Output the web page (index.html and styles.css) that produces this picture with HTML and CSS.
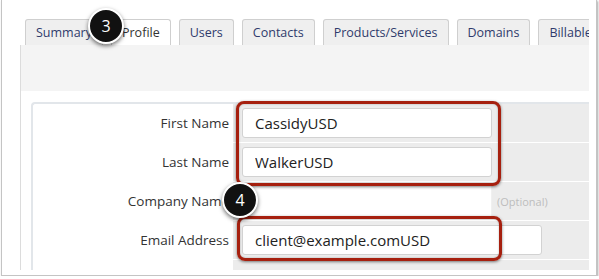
FILE: index.html
```html
<!DOCTYPE html>
<html lang="en">
<head>
    <meta charset="UTF-8">
    <meta name="viewport" content="width=device-width, initial-scale=1.0">
    <title>Client Profile</title>
    <link rel="stylesheet" href="styles.css">
</head>
<body>
    <div class="frame">
        <div class="tabs">
            <a href="#" class="tab">Summary</a>
            <a href="#" class="tab active">Profile</a>
            <a href="#" class="tab">Users</a>
            <a href="#" class="tab">Contacts</a>
            <a href="#" class="tab">Products/Services</a>
            <a href="#" class="tab">Domains</a>
            <a href="#" class="tab">Billable Items</a>
        </div>

        <div class="tab-panel">
            <div class="panel-head"></div>
            <div class="panel-body">
                <div class="form-box">
                    <div class="form-row">
                        <label class="field-label">First Name</label>
                        <div class="field">
                            <input type="text" class="text-input" value="CassidyUSD">
                        </div>
                    </div>
                    <div class="form-row">
                        <label class="field-label">Last Name</label>
                        <div class="field">
                            <input type="text" class="text-input" value="WalkerUSD">
                        </div>
                    </div>
                    <div class="form-row">
                        <label class="field-label">Company Name</label>
                        <div class="field">
                            <input type="text" class="text-input company-input" value="">
                            <span class="optional">(Optional)</span>
                        </div>
                    </div>
                    <div class="form-row">
                        <label class="field-label">Email Address</label>
                        <div class="field">
                            <input type="text" class="text-input wide" value="client@example.comUSD">
                        </div>
                    </div>
                    <div class="form-row">
                        <label class="field-label"></label>
                        <div class="field"></div>
                    </div>
                </div>
            </div>
        </div>

        <!-- annotations -->
        <div class="callout callout-names"></div>
        <div class="callout callout-email"></div>
        <div class="badge badge-3">3</div>
        <div class="badge badge-4">4</div>
    </div>
</body>
</html>
```

FILE: styles.css
```css
* {
    box-sizing: border-box;
}
body {
    margin: 0;
    font-family: "Open Sans", Arial, sans-serif;
    background-color: white;
}
.frame {
    position: relative;
    margin-left: 1px;
    width: 596px;
    height: 276px;
    padding-top: 19px;
    background: white;
    border: 1px solid #c4c4c4;
    border-top: none;
    box-shadow: 1px 1px 2px rgba(0,0,0,0.35);
    overflow: hidden;
}
.tabs {
    display: flex;
    gap: 8px;
    margin-left: 23px;
    width: 564px;
    height: 26px;
    white-space: nowrap;
    overflow: hidden;
}
.tab {
    display: block;
    height: 26px;
    line-height: 26px;
    padding: 0 10px;
    font-size: 12.5px;
    color: #2f3b6c;
    text-decoration: none;
    background: #efefef;
    border: 1px solid #cfcfcf;
    border-bottom: none;
    border-radius: 3px 3px 0 0;
    flex-shrink: 0;
}
.tab.active {
    background: white;
    color: #333;
}
.tab-panel {
    margin-left: 18px;
    width: 569px;
    height: 225px;
    border-left: 1px solid #dcdcdc;
    overflow: hidden;
}
.panel-head {
    height: 46px;
    background: #f4f4f4;
}
.panel-body {
    padding: 11px 0 0 10px;
}
.form-box {
    width: 600px;
    border: 2px solid #e2e6ea;
    border-right: none;
    border-radius: 4px 0 0 0;
}
.form-row {
    display: grid;
    grid-template-columns: 200px 1fr;
    height: 38px;
    margin-bottom: 1px;
}
.field-label {
    display: flex;
    align-items: center;
    justify-content: flex-end;
    padding-right: 4px;
    font-size: 13.5px;
    color: #333;
}
.field {
    display: flex;
    align-items: center;
    gap: 5px;
    padding-left: 9px;
    background: #ececec;
}
.text-input {
    width: 250px;
    height: 30px;
    padding: 0 12px;
    font-family: "Open Sans", Arial, sans-serif;
    font-size: 15px;
    color: #222;
    background: white;
    border: 1px solid #d2d2d2;
    border-radius: 3px;
}
.text-input.wide {
    width: 300px;
}
.company-input {
    height: 36px;
    border-color: #f0f0f0;
}
.optional {
    font-size: 11px;
    color: #bdbdbd;
}
.callout {
    position: absolute;
    border: 3px solid #a6200f;
    border-radius: 8px;
    box-shadow: 0 1px 3px rgba(0,0,0,0.5), inset 0 0 2px rgba(0,0,0,0.3);
}
.callout-names {
    left: 234px;
    top: 101px;
    width: 265px;
    height: 85px;
}
.callout-email {
    left: 235px;
    top: 216px;
    width: 265px;
    height: 45px;
}
.badge {
    position: absolute;
    width: 36px;
    height: 36px;
    border-radius: 50%;
    background: #111;
    border: 2px solid white;
    box-shadow: 0 2px 4px rgba(0,0,0,0.55);
    color: white;
    font-size: 16px;
    line-height: 32px;
    text-align: center;
}
.badge-3 {
    left: 86px;
    top: 8px;
}
.badge-4 {
    left: 220px;
    top: 182px;
}
```
